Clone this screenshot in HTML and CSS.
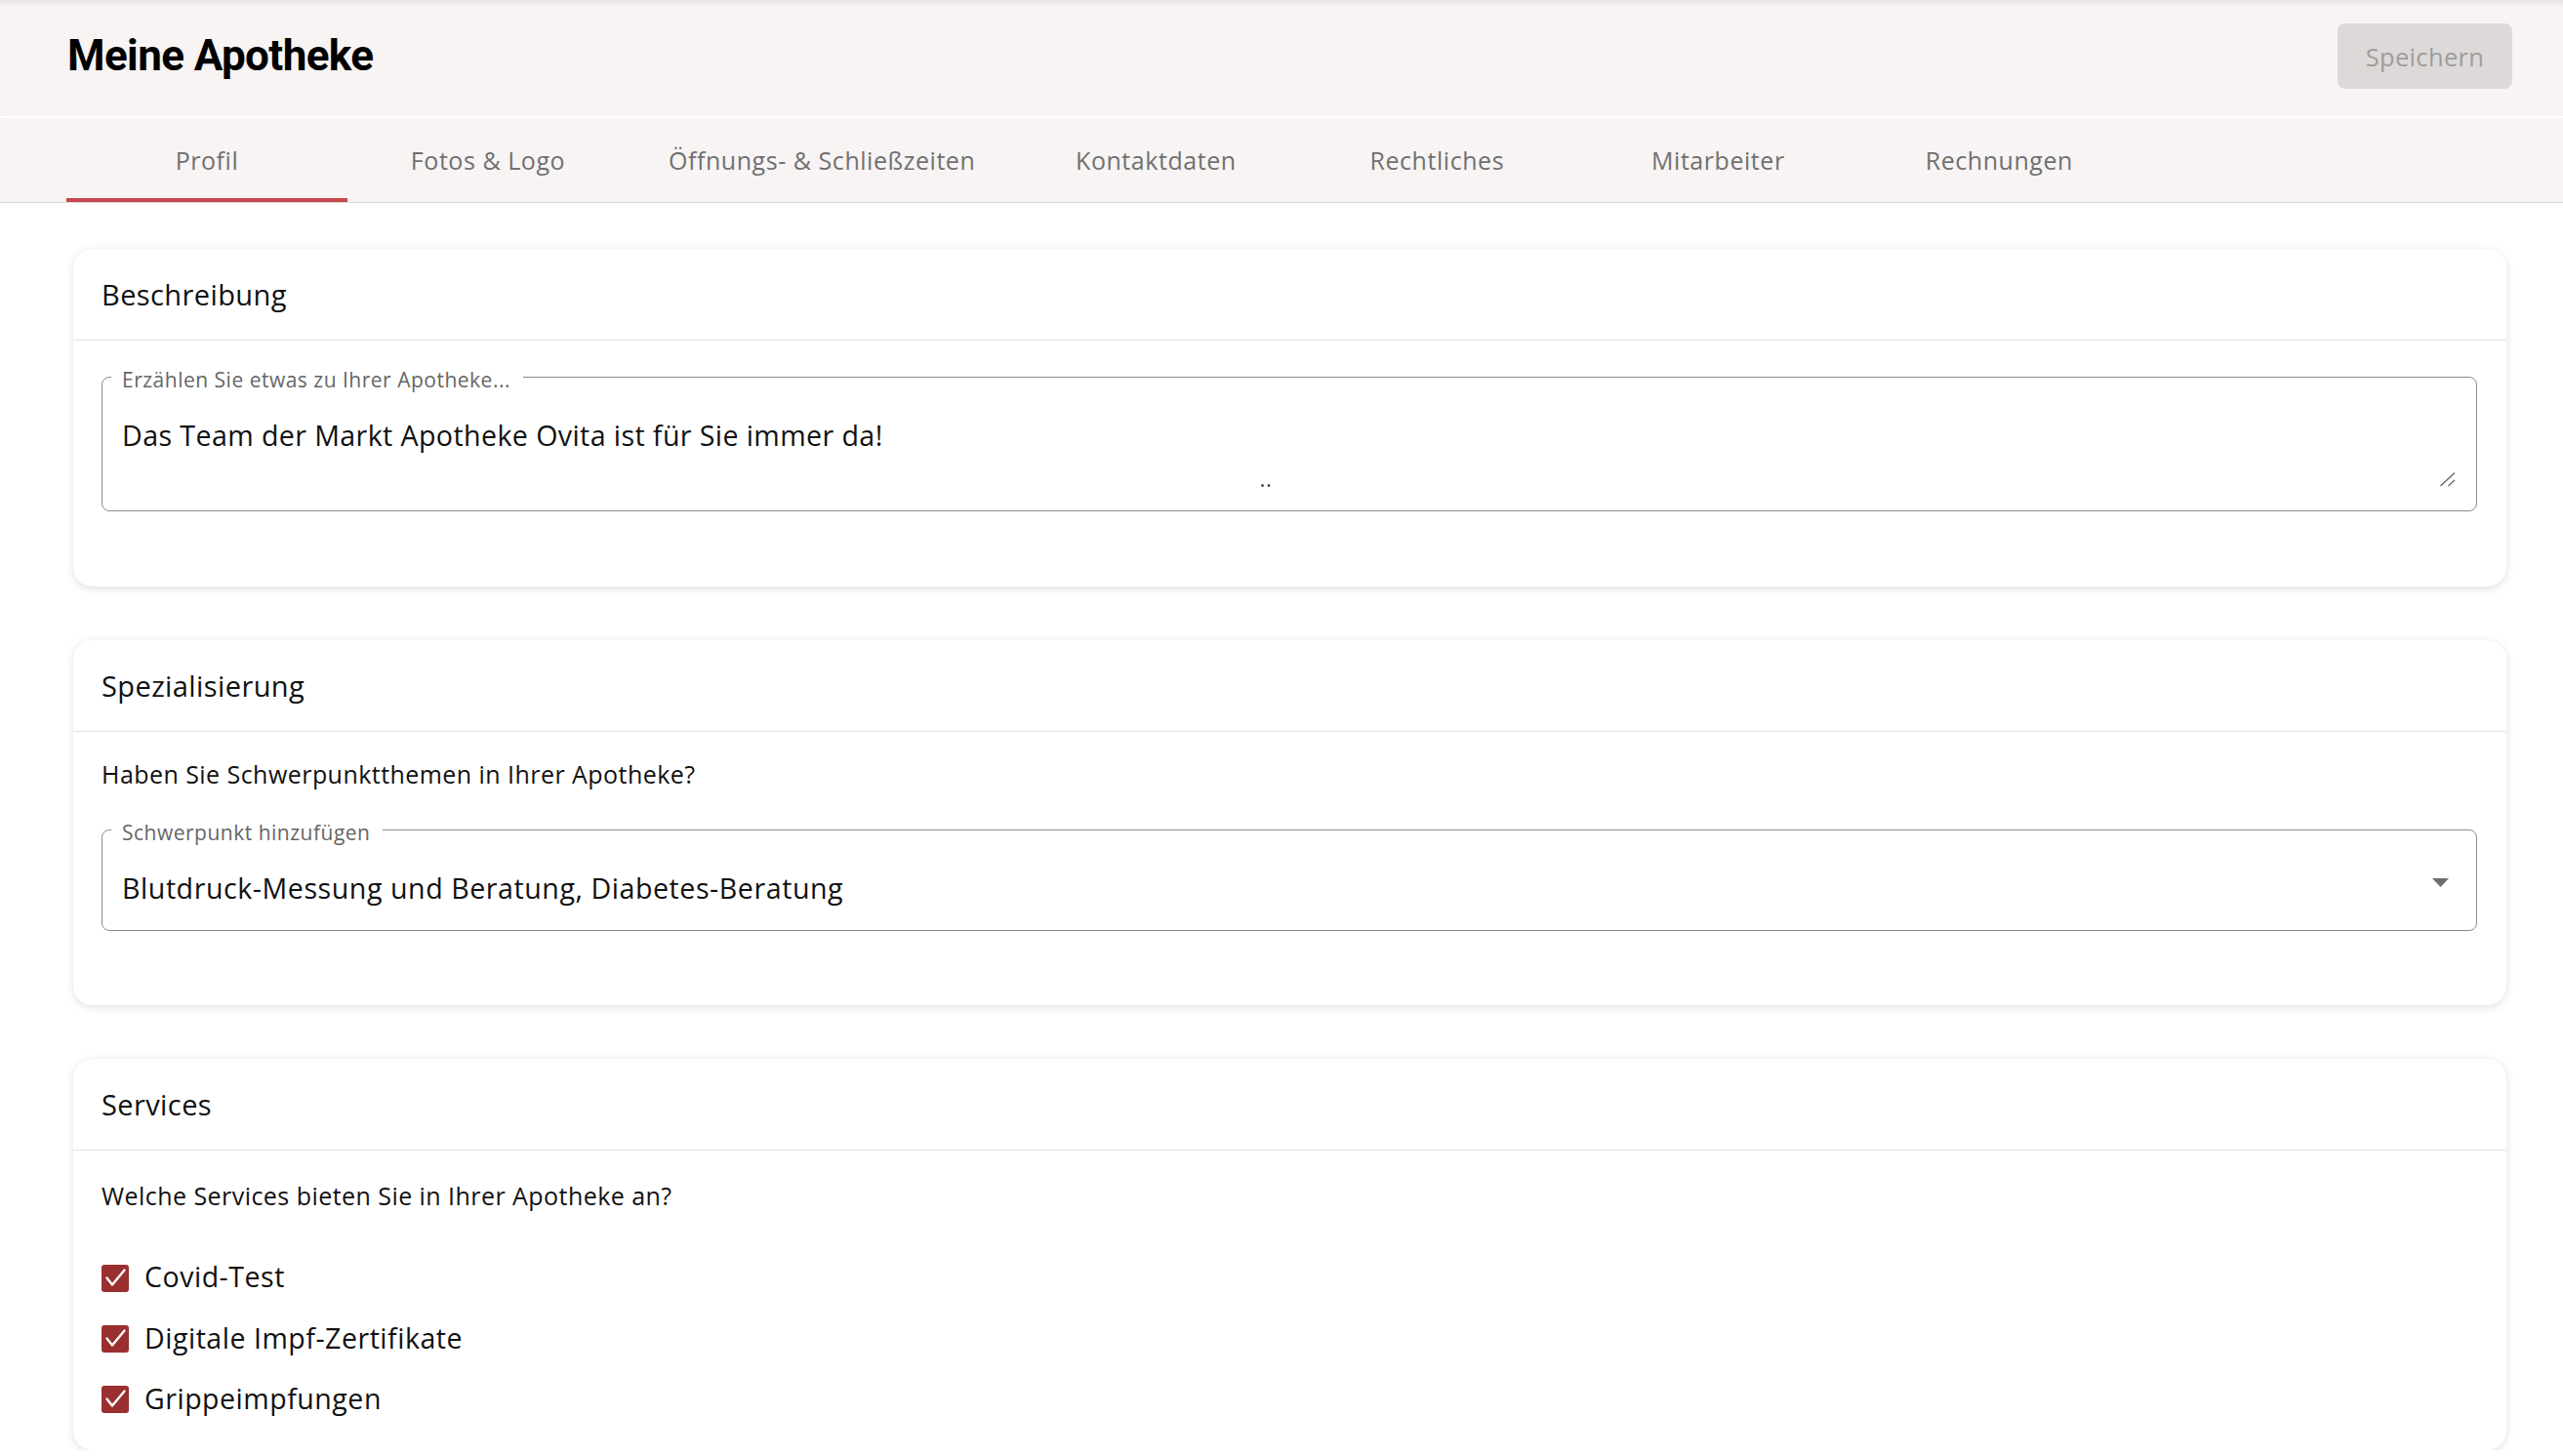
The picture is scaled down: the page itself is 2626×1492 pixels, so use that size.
FILE: index.html
```html
<!doctype html>
<html>
<head>
  <meta charset="utf-8">
  <title>Meine Apotheke</title>
  <link rel="stylesheet" href="styles.css">
</head>
<body>
  <header class="topbar">
    <h1 class="page-title">Meine Apotheke</h1>
    <button class="save-btn" disabled>Speichern</button>
  </header>
  <nav class="tabs">
    <a class="tab tab-active">Profil</a>
    <a class="tab">Fotos &amp; Logo</a>
    <a class="tab">Öffnungs- &amp; Schließzeiten</a>
    <a class="tab">Kontaktdaten</a>
    <a class="tab">Rechtliches</a>
    <a class="tab">Mitarbeiter</a>
    <a class="tab">Rechnungen</a>
  </nav>

  <main class="content">
    <section class="card">
      <div class="card-head">Beschreibung</div>
      <div class="card-body card-body-desc">
        <fieldset class="field">
          <legend>Erzählen Sie etwas zu Ihrer Apotheke...</legend>
          <textarea class="field-area">Das Team der Markt Apotheke Ovita ist für Sie immer da!</textarea>
          <svg class="area-dots" width="10" height="3" viewBox="0 0 10 3"><circle cx="1.5" cy="1.5" r="1.3" fill="#222"/><circle cx="8" cy="1.5" r="1.3" fill="#222"/></svg>
          <svg class="area-grip" width="16" height="15" viewBox="0 0 16 15"><line x1="0.5" y1="14" x2="15" y2="0.5" stroke="#6a6a6a" stroke-width="1.4"/><line x1="8.5" y1="14" x2="15" y2="8" stroke="#6a6a6a" stroke-width="1.4"/></svg>
        </fieldset>
      </div>
    </section>

    <section class="card">
      <div class="card-head">Spezialisierung</div>
      <div class="card-body card-body-spec">
        <p class="question">Haben Sie Schwerpunktthemen in Ihrer Apotheke?</p>
        <fieldset class="field field-select">
          <legend>Schwerpunkt hinzufügen</legend>
          <div class="select-row">
            <span class="field-value">Blutdruck-Messung und Beratung, Diabetes-Beratung</span>
            <svg class="select-arrow" width="17" height="9" viewBox="0 0 17 9"><polygon points="0,0 17,0 8.5,9" fill="#6e6e6e"/></svg>
          </div>
        </fieldset>
      </div>
    </section>

    <section class="card">
      <div class="card-head">Services</div>
      <div class="card-body card-body-services">
        <p class="question">Welche Services bieten Sie in Ihrer Apotheke an?</p>
        <ul class="checklist">
          <li class="check-item">
            <span class="checkbox"><svg width="28" height="28" viewBox="0 0 28 28"><polyline points="5.5,13.5 11,20.5 23.5,5.5" fill="none" stroke="#fff" stroke-width="2.4" stroke-linecap="round" stroke-linejoin="round"/></svg></span>
            Covid-Test
          </li>
          <li class="check-item">
            <span class="checkbox"><svg width="28" height="28" viewBox="0 0 28 28"><polyline points="5.5,13.5 11,20.5 23.5,5.5" fill="none" stroke="#fff" stroke-width="2.4" stroke-linecap="round" stroke-linejoin="round"/></svg></span>
            Digitale Impf-Zertifikate
          </li>
          <li class="check-item">
            <span class="checkbox"><svg width="28" height="28" viewBox="0 0 28 28"><polyline points="5.5,13.5 11,20.5 23.5,5.5" fill="none" stroke="#fff" stroke-width="2.4" stroke-linecap="round" stroke-linejoin="round"/></svg></span>
            Grippeimpfungen
          </li>
        </ul>
      </div>
    </section>
  </main>
</body>
</html>
```

FILE: styles.css
```css
html {
  background: #fff;
}

body {
  margin: 0;
  font-family: "Open Sans", Lato, sans-serif;
  color: #111;
}

.topbar {
  height: 119px;
  background: #f7f4f3;
  box-shadow: inset 0 7px 6px -5px rgba(0, 0, 0, 0.1);
  display: flex;
  align-items: center;
  justify-content: space-between;
  padding: 0 52px 0 69px;
  border-bottom: 2px solid #fff;
}

.page-title {
  margin: 0 0 5px 0;
  font-family: Roboto, sans-serif;
  font-weight: 700;
  font-size: 44px;
  letter-spacing: -0.6px;
  color: #000;
}

.save-btn {
  width: 179px;
  height: 67px;
  margin-bottom: 4px;
  border: none;
  border-radius: 8px;
  background: #dcd9d8;
  color: #a09c9b;
  font-family: "Open Sans", sans-serif;
  font-size: 25.5px;
  letter-spacing: 0.35px;
}

.tabs {
  display: flex;
  height: 86px;
  padding-left: 68px;
  background: #f7f4f3;
  border-bottom: 1px solid #dcd9d8;
}

.tab {
  min-width: 288px;
  box-sizing: border-box;
  padding: 4px 41px 0;
  display: flex;
  align-items: center;
  justify-content: center;
  font-size: 25px;
  letter-spacing: 0.55px;
  color: #707070;
  border-bottom: 4px solid transparent;
}

.tab-active {
  border-bottom-color: #c9474c;
}

.content {
  display: flex;
  flex-direction: column;
  gap: 55px;
  padding: 47px 58px 0 75px;
}

.card {
  background: #fff;
  border-radius: 20px;
  box-shadow: 0 2px 10px rgba(0, 0, 0, 0.13);
  letter-spacing: 0.45px;
}

.card-head {
  height: 93px;
  display: flex;
  align-items: center;
  padding-left: 29px;
  font-size: 29px;
  letter-spacing: 0.4px;
  border-bottom: 1px solid #e2e0e0;
}

.card-body {
  padding: 24px 30px 77px 29px;
}

.question {
  margin: 0 0 27px;
  font-size: 25px;
  line-height: 1.2;
}

.card-body-spec {
  padding-top: 28px;
  padding-bottom: 76px;
}

.card-body-spec .question {
  margin-bottom: 29px;
}

.field {
  position: relative;
  margin: 0;
  padding: 0 20px;
  border: 1.5px solid #8c8c8c;
  border-radius: 8px;
  min-width: 0;
}

.field legend {
  margin-left: -11px;
  padding: 6px 13px 0 11px;
  font-size: 21px;
  line-height: 20px;
  letter-spacing: 0.5px;
  color: #666;
}

.field-area {
  display: block;
  width: 100%;
  height: 71px;
  box-sizing: border-box;
  margin: 30px 0 23px;
  padding: 0;
  border: none;
  outline: none;
  resize: none;
  background: transparent;
  font-family: "Open Sans", sans-serif;
  font-size: 28.6px;
  line-height: 1.2;
  letter-spacing: 0.4px;
  color: #111;
}

.area-dots {
  position: absolute;
  left: 1187px;
  bottom: 24px;
}

.area-grip {
  position: absolute;
  right: 21px;
  bottom: 24px;
}

.select-row {
  display: flex;
  justify-content: space-between;
  align-items: flex-start;
  padding: 30px 8px 26px 0;
}

.field-value {
  font-size: 28.6px;
  line-height: 1.2;
  letter-spacing: 0.55px;
}

.select-arrow {
  margin-top: 7px;
}

.card-body-services {
  padding-top: 31px;
  padding-bottom: 36px;
}

.card-body-services .question {
  margin-bottom: 51px;
}

.checklist {
  list-style: none;
  margin: 0;
  padding: 0;
  display: flex;
  flex-direction: column;
  gap: 28px;
}

.check-item {
  display: flex;
  align-items: center;
  gap: 16px;
  font-size: 28.5px;
  line-height: 1.2;
  letter-spacing: 0.53px;
}

.checkbox {
  width: 28px;
  height: 28px;
  border-radius: 3px;
  background: #9a2f30;
  display: flex;
  margin-top: 3px;
}
```
